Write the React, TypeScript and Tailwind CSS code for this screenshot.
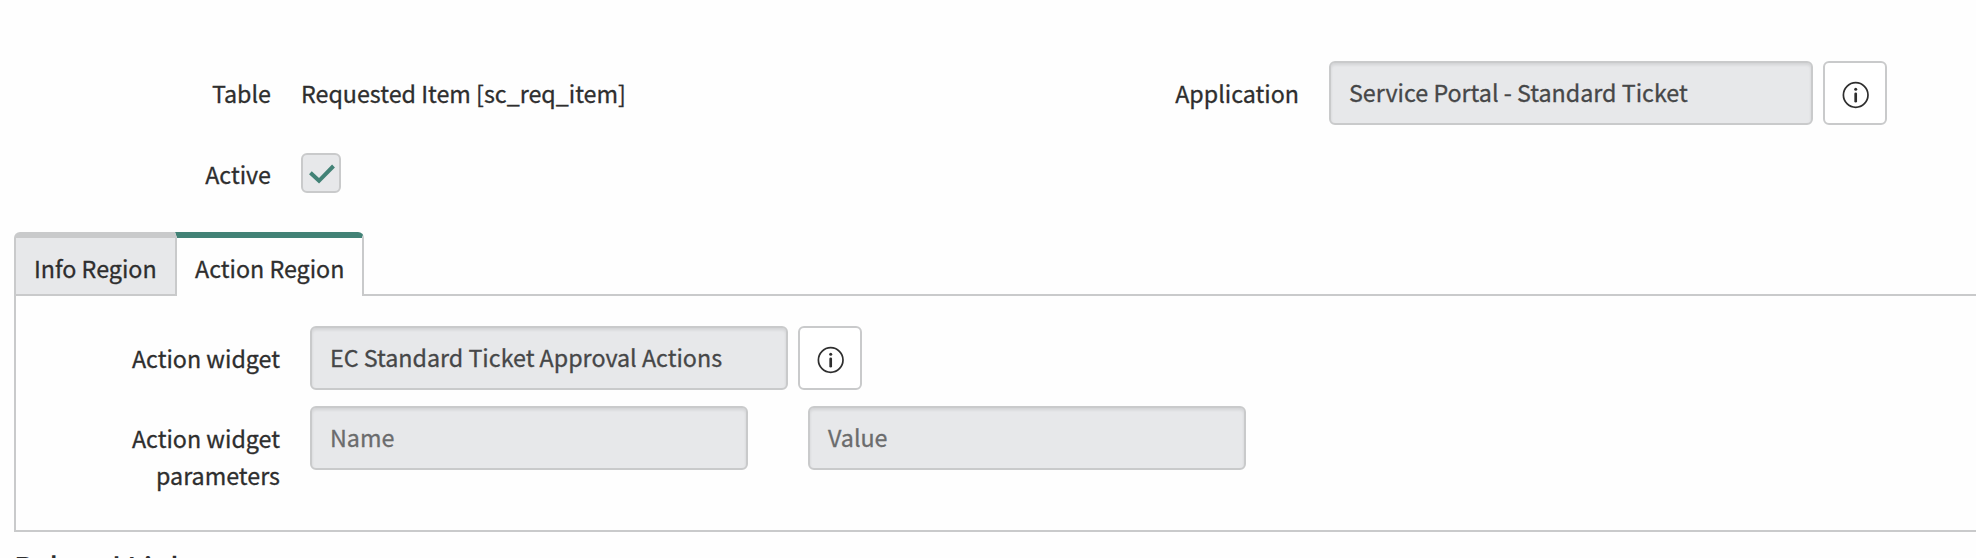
import type { ReactNode } from "react";

function InfoButton() {
  return (
    <button
      type="button"
      className="ml-2.5 flex size-16 shrink-0 items-center justify-center rounded-md border-2 border-[#c9cacb] bg-white pt-1"
    >
      <svg width="28" height="28" viewBox="0 0 28 28" fill="none">
        <circle cx="14.7" cy="14" r="12.3" stroke="#2e2e2e" strokeWidth="1.7" />
        <circle cx="14.7" cy="8.2" r="1.5" fill="#2e2e2e" />
        <path d="M14.7 12.8v7.4" stroke="#2e2e2e" strokeWidth="2.7" strokeLinecap="round" />
      </svg>
    </button>
  );
}

function Field({ children, className }: { children: ReactNode; className: string }) {
  return (
    <div
      className={`h-16 shrink-0 rounded-md border-2 border-[#c9cacb] bg-[#e7e8ea] pt-[11px] pl-[18px] shadow-[inset_0_2px_3px_rgba(0,0,0,0.09)] ${className}`}
    >
      {children}
    </div>
  );
}

function Label({ children, className }: { children: ReactNode; className: string }) {
  return <div className={`shrink-0 pt-[14px] text-right ${className}`}>{children}</div>;
}

export default function App() {
  return (
    <div className="h-[558px] w-[1976px] overflow-hidden bg-[#fefefe] font-['Noto_Sans_CJK_SC',sans-serif] text-[23.28px] leading-[37px] whitespace-nowrap text-[#2e2e2e] [-webkit-text-stroke:0.3px_currentColor]">
      <div className="flex pt-[61px]">
        <Label className="w-[271px]">Table</Label>
        <div className="ml-[30px] w-[700px] pt-[14px]">Requested Item [sc_req_item]</div>
        <Label className="w-[298px]">Application</Label>
        <Field className="ml-[30px] w-[484px] text-[#464748]">Service Portal - Standard Ticket</Field>
        <InfoButton />
      </div>

      <div className="flex h-[107px] pt-4">
        <Label className="w-[271px]">
          <span className="block pt-px">Active</span>
        </Label>
        <div className="mt-3 ml-[30px] flex size-10 items-center justify-center rounded-md border-2 border-[#c9cacb] bg-[#e7e8ea]">
          <svg width="36" height="36" viewBox="0 0 36 36" fill="none">
            <path d="M7.4 17.8 16 25.8 30.5 11" stroke="#428276" strokeWidth="4" />
          </svg>
        </div>
      </div>

      <div className="flex h-16 pl-3.5">
        <div className="w-[161px] rounded-tl-md border-t-[6px] border-b-2 border-l-2 border-[#c9cacb] bg-[#e7e8ea] pt-3 pl-[18px]">
          Info Region
        </div>
        <div className="w-[189px] rounded-tr-md border-x-2 border-t-[6px] border-x-[#c9cacb] border-t-[#428276] pt-3 pl-[18px]">
          Action Region
        </div>
        <div className="flex-1 border-b-2 border-[#c9cacb]" />
      </div>

      <div className="ml-3.5 h-[236px] border-b-2 border-l-2 border-[#c9cacb] pt-[30px]">
        <div className="flex">
          <Label className="w-[264px]">Action widget</Label>
          <Field className="ml-[30px] w-[478px] text-[#464748]">EC Standard Ticket Approval Actions</Field>
          <InfoButton />
        </div>
        <div className="mt-4 flex">
          <Label className="w-[264px]">
            Action widget
            <br />
            parameters
          </Label>
          <Field className="ml-[30px] w-[438px] text-[#6b6c6d]">Name</Field>
          <Field className="ml-[60px] w-[438px] text-[#6b6c6d]">Value</Field>
        </div>
      </div>

      <h2 className="mt-3 ml-3.5 text-[29.3px] leading-[44px] font-medium [-webkit-text-stroke:0px]">
        Related Links
      </h2>
    </div>
  );
}
